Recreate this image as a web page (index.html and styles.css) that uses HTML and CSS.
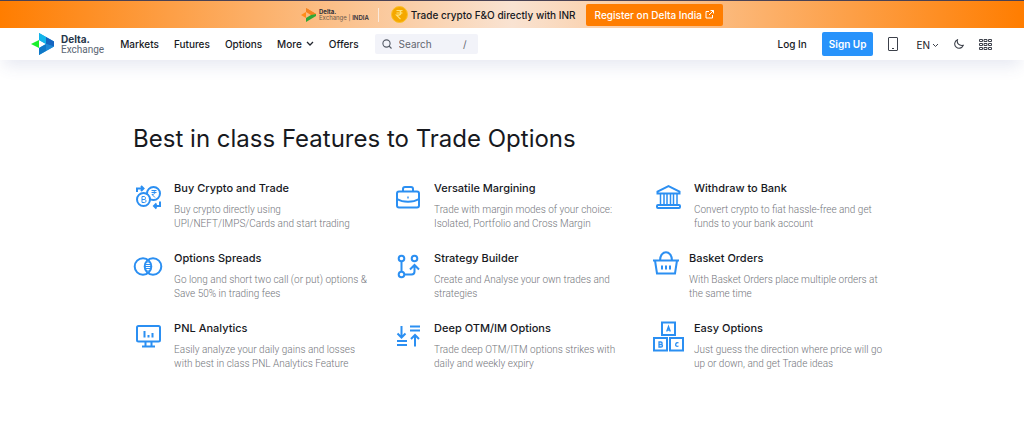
FILE: index.html
```html
<!DOCTYPE html>
<html lang="en">
<head>
  <meta charset="UTF-8" />
  <meta name="viewport" content="width=device-width, initial-scale=1.0"/>
  <title>Options Trading | Delta Exchange</title>
  <link rel="stylesheet" href="styles.css">
</head>
<body>

<div class="banner">
  <div class="india-logo">
    <svg width="15" height="14" viewBox="0 0 15 14">
      <path d="M5 0l10 6-5 1z" fill="#ff7d00"/>
      <path d="M5 0v4l5 3 5-1z" fill="#f58220"/>
      <path d="M0 7l5-3v6z" fill="#ff8c1a"/>
      <path d="M5 14v-4l5-3 5-1v2z" fill="#2fa836"/>
    </svg>
    <div class="india-name">
      <b>Delta.</b>
      <span>Exchange | <strong>INDIA</strong></span>
    </div>
  </div>
  <div class="banner-text">
    <svg width="17" height="17" viewBox="0 0 17 17">
      <circle cx="8.5" cy="8.5" r="8" fill="#f5a800" stroke="#fbc02d"/>
      <path d="M5.5 4.5h6M5.5 7h6M5.5 4.500h2c3.200 0 3.200 4.700 0 4.700h-2l4 4" fill="none" stroke="#ffe27a" stroke-width="1.200"/>
    </svg>
    <span>Trade crypto F&amp;O directly with INR</span>
  </div>
  <a class="register" href="#">Register on Delta India
    <svg width="9" height="9" viewBox="0 0 9 9" fill="none" stroke="#fff">
      <path d="M4 1.500H1v6.500h6.500V5M5.500.5h3v3M8.500.5L4 5"/>
    </svg>
  </a>
</div>

<header>
  <a class="logo" href="#">
    <svg width="24" height="24" viewBox="0 0 24 24">
      <path d="M8 1l15 8.500v5L8 23v-7l7-4-7-4z" fill="#1c9be0"/>
      <path d="M8 1l7 4v7L8 8z" fill="#12b5ea"/>
      <path d="M15 5l8 4.500v5L15 12z" fill="#1565c0"/>
      <path d="M15 12l8 2.500L15 19z" fill="#1e88d6"/>
      <path d="M8 16l7-4v7l-7 4z" fill="#0f78c8"/>
      <path d="M0 12l8-4v8z" fill="#19f02c"/>
    </svg>
    <span class="logo-name"><b>Delta.</b><span>Exchange</span></span>
  </a>
  <nav>
    <ul>
      <li><a href="#">Markets</a></li>
      <li><a href="#">Futures</a></li>
      <li><a href="#">Options</a></li>
      <li><a href="#">More <svg width="8" height="6" viewBox="0 0 8 6" fill="none" stroke="#23262f" stroke-width="1.300"><path d="M1 1l3 3 3-3"/></svg></a></li>
      <li><a href="#">Offers</a></li>
    </ul>
  </nav>
  <label class="search">
    <svg width="10" height="10" viewBox="0 0 10 10" fill="none" stroke="#555b66" stroke-width="1.100"><circle cx="4.500" cy="4.500" r="3.600"/><path d="M7 7l2.500 2.500"/></svg>
    <input type="text" placeholder="Search" aria-label="Search">
    <span>/</span>
  </label>
  <div class="actions">
    <a class="login" href="#">Log In</a>
    <button class="signup">Sign Up</button>
    <button class="icon-btn" aria-label="Mobile app">
      <svg width="10" height="14" viewBox="0 0 10 14" fill="none" stroke="#3c404a"><rect x=".5" y=".5" width="9" height="13" rx=".5"/><path d="M4 11.500h2"/></svg>
    </button>
    <button class="lang">EN <svg width="7" height="5" viewBox="0 0 7 5" fill="none" stroke="#3c404a"><path d="M1 1l2.500 2.500L6 1"/></svg></button>
    <button class="icon-btn" aria-label="Dark mode">
      <svg width="10" height="10" viewBox="0 0 10 10" fill="none" stroke="#3c404a" stroke-width="1.100"><path d="M3.500.7C2.500 4.500 5 7 9.300 6.300 8 9.300 4.500 10.200 2.200 8.200S.2 2.200 3.500.7z"/></svg>
    </button>
    <button class="icon-btn" aria-label="Apps">
      <svg width="13" height="13" viewBox="0 0 13 13" fill="none" stroke="#3c404a">
        <path d="M.5 1.500h3v2h-3zM5 1.500h3v2H5zM9.500 1.500h3v2h-3zM.5 5.500h3v2h-3zM5 5.500h3v2H5zM9.500 5.500h3v2h-3zM.5 9.500h3v2h-3zM5 9.500h3v2H5zM9.500 9.500h3v2h-3z"/>
      </svg>
    </button>
  </div>
</header>

<main>
  <h1>Best in class Features to Trade Options</h1>
  <div class="features">

    <div class="feature">
      <svg class="icon" viewBox="0 0 31 31">
        <circle cx="20.500" cy="12.500" r="6.500"/>
        <circle cx="10.500" cy="18.500" r="6.500" fill="#fff"/>
        <path d="M4 11V7.500h6M8 5l2.500 2.500L8 10M27 20.500V25h-6M23.500 22.500L21 25l2.500 2.500"/>
        <path class="thin" d="M18.500 9.500h5M18.500 11.500h5M19 9.500c4 0 4 4 0 4l3 3M9 15.500v6M9 15.500h2c2 0 2 3 0 3H9h2.500c2 0 2 3 0 3H9"/>
      </svg>
      <div>
        <h3>Buy Crypto and Trade</h3>
        <p>Buy crypto directly using UPI/NEFT/IMPS/Cards and start trading</p>
      </div>
    </div>

    <div class="feature">
      <svg class="icon" viewBox="0 0 31 31">
        <rect x="4" y="10.500" width="22" height="16" rx="2"/>
        <path d="M10 10.500V8c0-1.500 1-2 2-2h6c1 0 2 .5 2 2v2.500M4 18c6 3.600 16 3.600 22 0M14.300 16.500h1.400"/>
      </svg>
      <div>
        <h3>Versatile Margining</h3>
        <p>Trade with margin modes of your choice: Isolated, Portfolio and Cross Margin</p>
      </div>
    </div>

    <div class="feature">
      <svg class="icon" viewBox="0 0 31 31">
        <path d="M4.500 12.500v-2L15.500 5l11 5.500v2z"/>
        <path class="bars" d="M7.500 13v11M11 13v11M14 13v11M17.500 13v11M20.500 13v11M24 13v11"/>
        <rect x="4" y="24" width="23" height="3" rx="1"/>
      </svg>
      <div>
        <h3>Withdraw to Bank</h3>
        <p>Convert crypto to fiat hassle-free and get funds to your bank account</p>
      </div>
    </div>

    <div class="feature">
      <svg class="icon" viewBox="0 0 31 31">
        <circle cx="10" cy="15.500" r="8.300"/>
        <circle cx="20" cy="15.500" r="8.300"/>
        <path class="thin" d="M13 11h4M12 13.500h6M12 15.500h6M12 17.500h6M13 20h4"/>
      </svg>
      <div>
        <h3>Options Spreads</h3>
        <p>Go long and short two call (or put) options &amp; Save 50% in trading fees</p>
      </div>
    </div>

    <div class="feature">
      <svg class="icon" viewBox="0 0 31 31">
        <circle cx="8.500" cy="7.500" r="2.800"/>
        <circle cx="21.500" cy="7.500" r="2.800"/>
        <circle cx="8.500" cy="23.500" r="2.800"/>
        <path d="M8.500 10.500v10M11.500 23.500h7c2 0 3-1 3-3v-6M17 18.500l4.500-4.500 4.500 4.500"/>
      </svg>
      <div>
        <h3>Strategy Builder</h3>
        <p>Create and Analyse your own trades and strategies</p>
      </div>
    </div>

    <div class="feature">
      <svg class="icon narrow" viewBox="0 0 26 31">
        <path d="M0 9.500h26M2 9.500l2 13h18l2-13M7 9.500c0-11 12-11 12 0"/>
        <path d="M9 14.500v4M13 14.500v4M17 14.500v4"/>
      </svg>
      <div>
        <h3>Basket Orders</h3>
        <p>With Basket Orders place multiple orders at the same time</p>
      </div>
    </div>

    <div class="feature">
      <svg class="icon" viewBox="0 0 31 31">
        <rect x="4" y="5" width="23" height="15.500" rx="1.500"/>
        <path d="M12.500 21v4M18.500 21v4M9 25.500h13M11.500 10v6.500M15.500 14v2.500M19.500 12v4.500"/>
      </svg>
      <div>
        <h3>PNL Analytics</h3>
        <p>Easily analyze your daily gains and losses with best in class PNL Analytics Feature</p>
      </div>
    </div>

    <div class="feature">
      <svg class="icon" viewBox="0 0 31 31">
        <path d="M8.500 5v11M4.500 12.500l4 4 4-4M22 25.500v-11M18 18l4-4 4 4M17 5.500h10M17 9.500h10M4 20h10M4 24h10"/>
      </svg>
      <div>
        <h3>Deep OTM/IM Options</h3>
        <p>Trade deep OTM/ITM options strikes with daily and weekly expiry</p>
      </div>
    </div>

    <div class="feature">
      <svg class="icon" viewBox="0 0 31 31">
        <path d="M9 1.500h13v12.500H9zM1 17h13v12.500H1zM17 17h13v12.500H17z"/>
        <path class="letters" d="M13.700 10.500l1.800-5 1.800 5M14.200 9h2.600M6 21v5h2c2 0 2-2.500 0-2.500H6h1.800c1.800 0 1.800-2.500 0-2.500zM25.500 22c-3-2-4.500 5 0 3"/>
      </svg>
      <div>
        <h3>Easy Options</h3>
        <p>Just guess the direction where price will go up or down, and get Trade ideas</p>
      </div>
    </div>

  </div>
</main>

</body>
</html>
```
FILE: styles.css
```css
* { box-sizing: border-box; margin: 0; padding: 0; font-family: Inter, 'Liberation Sans', sans-serif; }
body { background-color: #fff; color: #17191e; }
a { color: inherit; text-decoration: none; }
button { background: none; border: none; color: inherit; cursor: pointer; }
svg { display: block; flex-shrink: 0; }

/* top banner */
.banner { display: flex; justify-content: center; align-items: center; height: 28px; border-top: 1px solid #4a4254; background: linear-gradient(90deg, #ff7d00, #f9e3d2 50%, #ff7d00); }
.india-logo { display: flex; align-items: center; gap: 3px; padding-right: 9px; border-right: 1px solid #fbe9da; }
.india-name { font-size: 6px; line-height: 6px; color: #6b5a4c; }
.india-name b { display: block; color: #2e2e38; }
.india-name strong { color: #2e2e38; font-weight: 600; }
.banner-text { display: flex; align-items: center; gap: 3px; margin: 0 10px 0 12px; font-size: 10px; font-weight: 500; }
.register { display: flex; align-items: center; gap: 3px; height: 22px; padding: 0 9px; border-radius: 2px; background-color: #ff7d00; color: #fff; font-size: 10px; font-weight: 500; }

/* navigation */
header { display: flex; align-items: center; height: 32px; padding: 0 32px 0 31px; background-color: #fff; box-shadow: 0 10px 16px -4px rgba(60, 75, 150, 0.12); font-size: 10px; font-weight: 500; }
.logo { display: flex; align-items: center; gap: 6px; }
.logo-name { font-size: 10px; line-height: 10px; color: #5b6674; font-weight: 400; }
.logo-name b { display: block; color: #26364a; }
.logo-name span { font-family: Roboto, 'Liberation Sans', sans-serif; }
nav ul { display: flex; gap: 15px; margin: 0 16px; list-style: none; }
nav a { display: flex; align-items: center; gap: 4px; }
.search { display: flex; align-items: center; gap: 7px; width: 103px; height: 20px; padding: 0 11px 0 7px; border-radius: 2px; background-color: #f2f3f9; color: #62666f; font-weight: 400; }
.search input { flex: 1; min-width: 0; border: none; outline: none; background: none; font-size: 10px; }
.search input::placeholder { color: #62666f; }
.actions { display: flex; align-items: center; gap: 15px; margin-left: auto; }
.signup { height: 24px; padding: 0 7px; border-radius: 2px; background-color: #2893fb; color: #fff; font-size: 10px; font-weight: 600; }
.lang { display: flex; align-items: center; gap: 2px; padding: 2px 0 0 3px; font-size: 10px; }

/* features */
main { padding: 62px 13% 60px; }
h1 { font-size: 24px; line-height: 34px; font-weight: 400; }
.features { display: grid; grid-template-columns: repeat(3, 1fr); gap: 19px 22px; margin-top: 24px; }
.feature { display: flex; gap: 10px; }
.feature h3 { font-size: 11px; line-height: 16px; font-weight: 500; margin-bottom: 7px; }
.feature p { font-family: Roboto, 'Liberation Sans', sans-serif; font-size: 10px; line-height: 14px; font-weight: 300; color: #74767c; }
.icon { width: 31px; height: 31px; margin-top: 1px; fill: none; stroke: #2b8ff2; stroke-width: 2; }
.icon.narrow { width: 26px; }
.icon .thin { stroke-width: 1; }
.icon .bars { stroke-width: 1.5; }
.icon .letters { stroke-width: 1.3; }
```
